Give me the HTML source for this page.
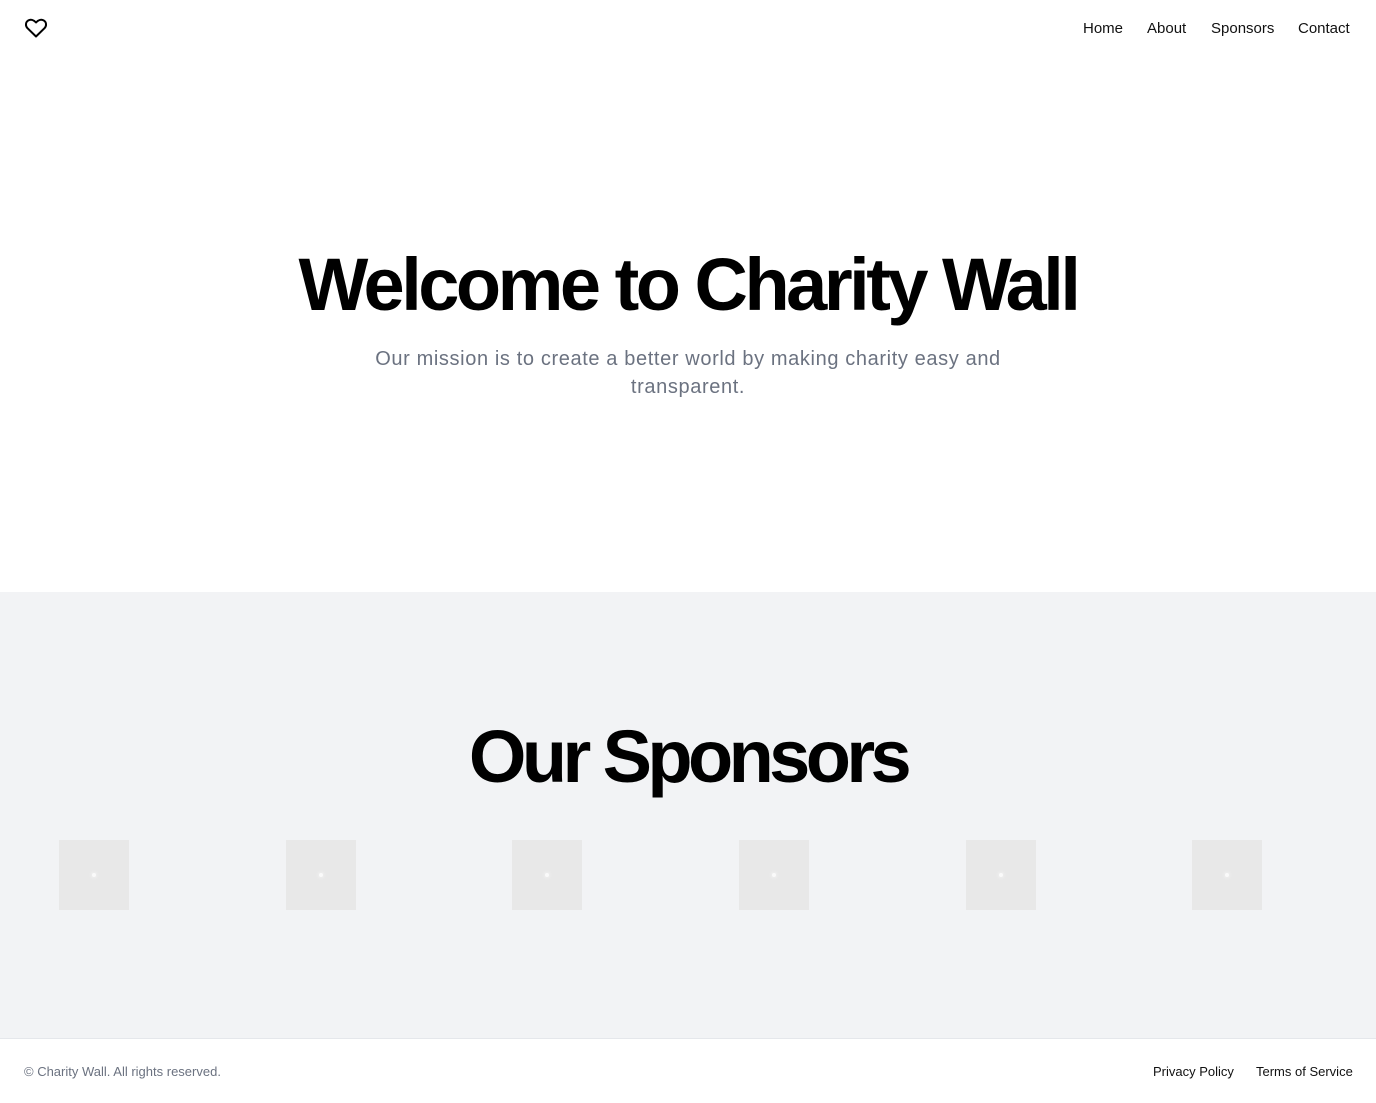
<!DOCTYPE html>
<html><head><style>
*{margin:0;padding:0;box-sizing:border-box}
body{width:1376px;height:1103px;font-family:"Liberation Sans",sans-serif;background:#fff;position:relative;color:#000}
nav a{position:absolute;top:20px;font-size:15px;color:#111;text-decoration:none}
h1{position:absolute;left:0;width:1376px;text-align:center;font-size:74px;font-weight:bold;letter-spacing:-3.5px;line-height:1}
.sub{position:absolute;top:345px;left:0;width:1376px;text-align:center;font-size:20px;color:#6b7280;line-height:28px;letter-spacing:0.62px}
.gray{position:absolute;top:592px;left:0;width:1376px;height:446px;background:#f2f3f5}
.img{position:absolute;top:840px;width:70px;height:70px;background:#e8e8e8}
.img::after{content:"";position:absolute;left:33px;top:33px;width:4px;height:4px;border-radius:50%;background:#fafafa;box-shadow:0 0 4px #fff}
footer{position:absolute;top:1038px;left:0;width:1376px;height:65px;border-top:1px solid #e5e7eb}
footer span{position:absolute;top:25px;font-size:13px}
</style></head><body>
<svg style="position:absolute;left:24px;top:16px" width="24" height="24" viewBox="0 0 24 24" fill="none" stroke="#000" stroke-width="2" stroke-linejoin="round"><path d="M12 20.5 3.5 12.2C1.2 9.9 1.5 6.1 4.2 4.5 6.6 3.1 9.6 3.8 12 6.5 14.4 3.8 17.4 3.1 19.8 4.5 22.5 6.1 22.8 9.9 20.5 12.2Z"/></svg>
<nav><a style="left:1083px">Home</a><a style="left:1147px">About</a><a style="left:1211px">Sponsors</a><a style="left:1298px">Contact</a></nav>
<h1 style="top:248px">Welcome to Charity Wall</h1>
<div class="sub">Our mission is to create a better world by making charity easy and<br>transparent.</div>
<div class="gray"></div>
<h1 style="top:720px;letter-spacing:-4.6px">Our Sponsors</h1>
<div class="img" style="left:59px"></div><div class="img" style="left:286px"></div><div class="img" style="left:512px"></div><div class="img" style="left:739px"></div><div class="img" style="left:966px"></div><div class="img" style="left:1192px"></div>
<footer><span style="left:24px;color:#6b7280">© Charity Wall. All rights reserved.</span><span style="left:1153px;color:#111">Privacy Policy</span><span style="left:1256px;color:#111">Terms of Service</span></footer>
</body></html>
